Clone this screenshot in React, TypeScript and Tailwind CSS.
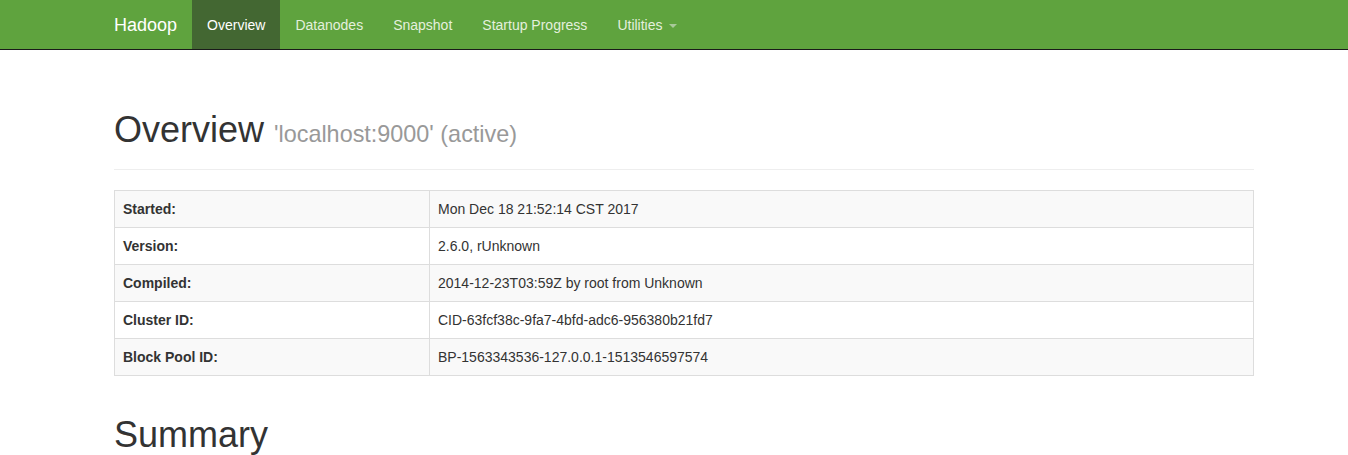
import React from "react";

const rows: [string, string][] = [
  ["Started:", "Mon Dec 18 21:52:14 CST 2017"],
  ["Version:", "2.6.0, rUnknown"],
  ["Compiled:", "2014-12-23T03:59Z by root from Unknown"],
  ["Cluster ID:", "CID-63fcf38c-9fa7-4bfd-adc6-956380b21fd7"],
  ["Block Pool ID:", "BP-1563343536-127.0.0.1-1513546597574"],
];

const navItems = ["Overview", "Datanodes", "Snapshot", "Startup Progress"];

export default function App() {
  return (
    <div className="min-h-[455px] bg-white font-['Liberation_Sans',Arial,sans-serif] text-[14px] leading-[20px] text-[#333]">
      {/* barra superior */}
      <nav className="h-[50px] bg-[#5fa33e] border-b border-[#1a1a1a]">
        <div className="w-[1170px] ml-[99px] flex h-[49px]">
          <a className="px-[15px] h-full flex items-center text-[18px] text-white">Hadoop</a>
          {navItems.map((item, i) => (
            <a
              key={item}
              className={
                i === 0
                  ? "px-[15px] h-full flex items-center bg-[#436732] text-white"
                  : "px-[15px] h-full flex items-center text-[#e4f0dd]"
              }
            >
              {item}
            </a>
          ))}
          <a className="px-[15px] h-full flex items-center text-[#e4f0dd]">
            Utilities
            <span className="ml-[6px] mt-[2px] w-0 h-0 border-x-[4px] border-x-transparent border-t-[4px] border-t-[#a9c99a]" />
          </a>
        </div>
      </nav>

      <div className="w-[1140px] ml-[114px]">
        {/* cabecera */}
        <div className="mt-[60px] mb-[20px] pb-[9px] border-b border-[#eee]">
          <h1 className="text-[36px] leading-[39.6px] mb-[10px] text-[#333]">
            Overview{" "}
            <small className="text-[23.4px] leading-none text-[#999]">'localhost:9000' (active)</small>
          </h1>
        </div>

        <table className="w-full border-collapse border border-[#ddd] mb-[20px]">
          <tbody>
            {rows.map(([k, v], i) => (
              <tr key={k} className={i % 2 === 0 ? "bg-[#f9f9f9]" : "bg-white"}>
                <th className="w-[315px] border border-[#ddd] p-[8px] text-left font-bold">{k}</th>
                <td className="border border-[#ddd] p-[8px]">{v}</td>
              </tr>
            ))}
          </tbody>
        </table>

        <div className="pt-[19px]">
          <h1 className="text-[36px] leading-[39.6px] text-[#333]">Summary</h1>
        </div>
      </div>
    </div>
  );
}
